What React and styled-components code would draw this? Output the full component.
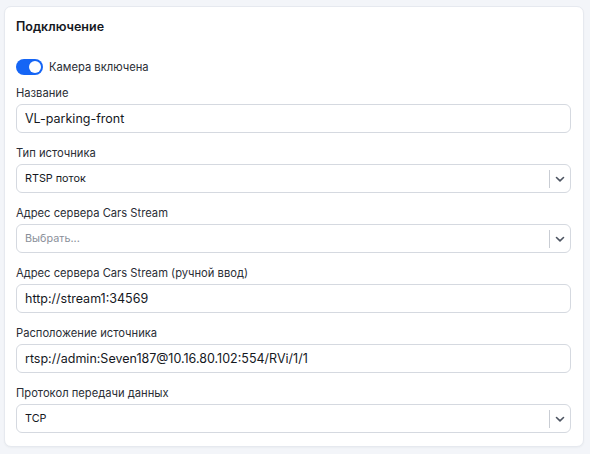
import React, { useState } from 'react'
import styled, { createGlobalStyle } from 'styled-components'

const GlobalStyle = createGlobalStyle`
  body {
    margin: 0;
    background: #f3f5f9;
    font-family: Inter, "Noto Sans", sans-serif;
    color: #1c1f26;
  }
`

const Page = styled.div`
  padding: 6px 6px 8px 4px;
`

const Card = styled.section`
  background: #fff;
  border: 1px solid #e6e9ef;
  border-radius: 7px;
  padding: 11px 12px 13px 11px;
  box-shadow: 0 1px 2px rgba(30, 40, 60, 0.04);
`

const Title = styled.h2`
  margin: 0 0 23px;
  font-size: 12.5px;
  font-weight: 600;
  line-height: 18px;
  color: #15181e;
`

const ToggleRow = styled.label`
  display: flex;
  align-items: center;
  gap: 6px;
  font-size: 11.2px;
  color: #2a2e36;
  margin-bottom: 10px;
  cursor: pointer;
`

const Track = styled.span`
  position: relative;
  width: 27px;
  height: 16px;
  border-radius: 8px;
  background: ${p => (p.$on ? '#1565f5' : '#c9ced8')};
  flex-shrink: 0;
`

const Knob = styled.span`
  position: absolute;
  top: 2px;
  left: ${p => (p.$on ? '13px' : '2px')};
  width: 12px;
  height: 12px;
  border-radius: 50%;
  background: #fff;
`

const Field = styled.div`
  display: flex;
  flex-direction: column;
  gap: 3px;
  & + & {
    margin-top: 12px;
  }
`

const Label = styled.span`
  font-size: 11.2px;
  line-height: 16px;
  color: #2a2e36;
`

const Box = styled.div`
  display: flex;
  align-items: center;
  box-sizing: border-box;
  height: 29px;
  border: 1px solid #d5d9e0;
  border-radius: 6px;
  padding-left: 8px;
  font-size: ${p => (p.$select ? '10.8px' : '12.5px')};
  color: ${p => (p.$placeholder ? '#8a8f99' : '#15181e')};
`

const Value = styled.span`
  flex: 1;
  white-space: nowrap;
  overflow: hidden;
`

const Indicator = styled.span`
  display: flex;
  align-items: center;
  height: 100%;
  &::before {
    content: '';
    width: 1px;
    height: 18px;
    background: #c9cdd4;
  }
`

const Chevron = styled.svg`
  width: 20px;
  height: 14px;
  color: #4d5461;
`

function Select({ value, placeholder }) {
  return (
    <Box $select $placeholder={!value}>
      <Value>{value || placeholder}</Value>
      <Indicator>
        <Chevron viewBox="0 0 20 14">
          <path d="M6.5 5.5l3.5 3.3 3.5-3.3" fill="none" stroke="currentColor" strokeWidth="1.6" strokeLinecap="round" strokeLinejoin="round" />
        </Chevron>
      </Indicator>
    </Box>
  )
}

export default function App() {
  const [enabled, setEnabled] = useState(true)

  return (
    <Page>
      <GlobalStyle />
      <Card>
        <Title>Подключение</Title>
        <ToggleRow onClick={() => setEnabled(v => !v)}>
          <Track $on={enabled}>
            <Knob $on={enabled} />
          </Track>
          Камера включена
        </ToggleRow>
        <Field>
          <Label>Название</Label>
          <Box><Value>VL-parking-front</Value></Box>
        </Field>
        <Field>
          <Label>Тип источника</Label>
          <Select value="RTSP поток" />
        </Field>
        <Field>
          <Label>Адрес сервера Cars Stream</Label>
          <Select placeholder="Выбрать..." />
        </Field>
        <Field>
          <Label>Адрес сервера Cars Stream (ручной ввод)</Label>
          <Box><Value>http://stream1:34569</Value></Box>
        </Field>
        <Field>
          <Label>Расположение источника</Label>
          <Box><Value>rtsp://admin:Seven187@10.16.80.102:554/RVi/1/1</Value></Box>
        </Field>
        <Field>
          <Label>Протокол передачи данных</Label>
          <Select value="TCP" />
        </Field>
      </Card>
    </Page>
  )
}
